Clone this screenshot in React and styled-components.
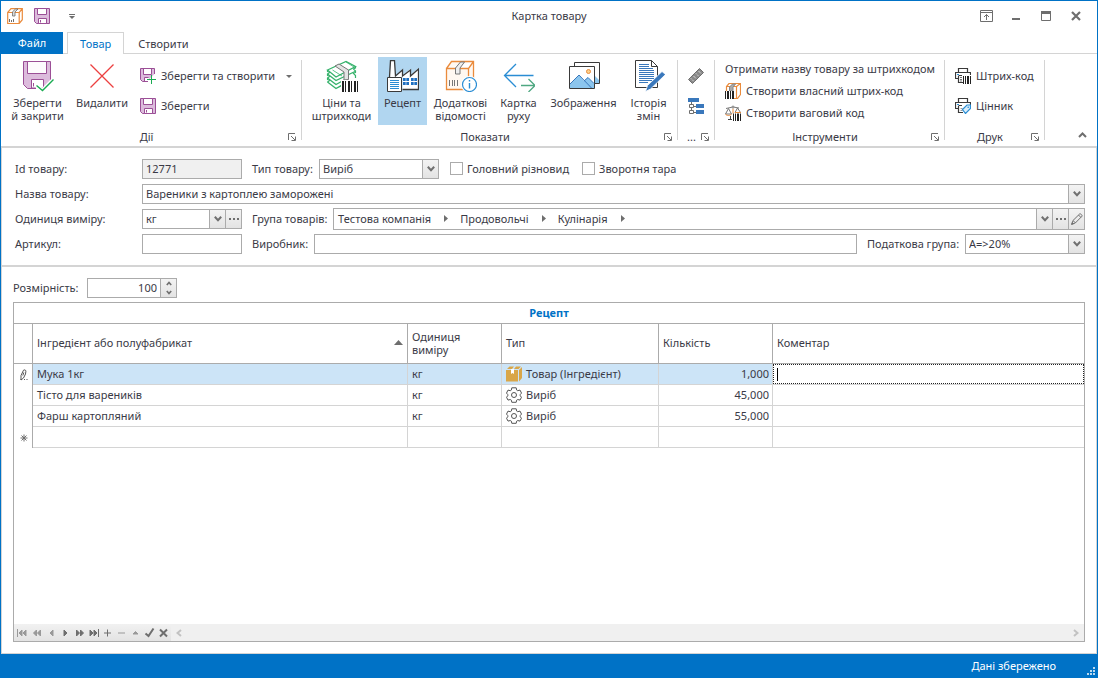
import React from "react";
import styled, { createGlobalStyle, css } from "styled-components";

const c = {
  blue: "#0072c6",
  text: "#3a3a46",
  line: "#d4d4d4",
  edge: "#ababab",
  gray: "#6e6e6e",
  purple: "#9b4f96",
  lilac: "#dcbbdc",
  orange: "#ea8b3c",
  green: "#1aab52",
  steel: "#3a78bc",
  sky: "#2a8dd4",
  dark: "#3a3a3a",
};

const Global = createGlobalStyle`
  *, *::before, *::after { box-sizing: border-box; }
  body { margin: 0; background: #fff; }
  body, button, input, select {
    font-family: "Noto Sans", "Open Sans", sans-serif;
    font-size: 11px;
    line-height: 13px;
    color: ${c.text};
  }
  button { border: 0; padding: 0; background: none; cursor: pointer; }
  svg { display: block; flex: none; }
`;

/* ---------- icons ---------- */

const Svg = ({ w = 16, h = w, children, ...rest }) => (
  <svg width={w} height={h} viewBox={`0 0 ${w} ${h}`} fill="none" aria-hidden="true" {...rest}>
    {children}
  </svg>
);

const SaveIcon = () => (
  <Svg>
    <path d="M.5.5h15v15h-13l-2-2z" fill={c.lilac} stroke={c.purple} />
    <path d="M3.5.5h9v6h-9zM4.5 10.5h8v5h-8z" fill="#fff" stroke={c.purple} />
    <path d="M6.500 12v2.500" stroke={c.purple} />
  </Svg>
);

const SaveNewIcon = () => (
  <Svg>
    <path d="M14.5 6V.5H.5v11l2 2H7" fill={c.lilac} />
    <path d="M4 1h7v5H4zM5 10h4v3H5z" fill="#fff" />
    <path d="M14.5 6V.5H.5v11l2 2H8M3.5.5v6h8v-6M4.5 13V9.500h4" stroke={c.purple} />
    <path d="M11.500 7v9M7 11.500h9" stroke={c.green} />
  </Svg>
);

const SaveCloseIcon = () => (
  <Svg w={32}>
    <path d="M1.500 1.500h27v27h-23l-4-4z" fill={c.lilac} stroke={c.purple} />
    <path d="M5.500 1.500h19v12h-19z" fill="#fdfbfd" stroke={c.purple} />
    <path d="M9.500 28v-8.500h12V28z" fill="#fff" stroke={c.purple} />
    <path d="M11.500 23v3.500" stroke={c.purple} />
    <path d="M14 24.500l6.500 6L32 18.500V32H14z" fill="#fff" />
    <path d="M14.500 25.500l6 5L31.500 19.500" stroke="#fff" strokeWidth="4" />
    <path d="M14.500 25.500l6 5L31.500 19.500" stroke={c.green} strokeWidth="1.400" />
  </Svg>
);

const DeleteIcon = () => (
  <Svg w={32}>
    <path d="M4.500 4.500l23 23M27.500 4.500l-23 23" stroke="#ec4040" strokeWidth="1.300" />
  </Svg>
);

const BoxIcon = () => (
  <Svg>
    <path d="M.7 4.500h11.500v11H.7zM.7 4.500L4 .7h11.300v11l-3.100 3.800V4.500l3.100-3.800" fill="#fff" stroke={c.orange} strokeWidth="1.200" />
    <path d="M5.500 8V3.800L8.500 1H11L8 4v4z" fill="#ddd" stroke={c.gray} strokeWidth=".8" />
    <path d="M2.500 11v3M4.500 12v2M6.500 11v3" stroke={c.gray} />
  </Svg>
);

const Bars = ({ x, y, h, n = 5, fill = "#222" }) => (
  <g fill={fill}>
    {Array.from({ length: n }, (_, i) => (
      <rect key={i} x={x + i * 3} y={y} width={i % 2 ? 1 : 2} height={h} />
    ))}
  </g>
);

const PricesIcon = () => (
  <Svg w={32}>
    <path d="M1.500 22L10 28.500 16 25M1.500 18L10 24.500 20 19M1.500 14L10 20.500 29 11.500M10 28.500l6-3" stroke="#35b26b" strokeWidth="1.300" />
    <path d="M1.500 10L20 1.500l9.500 5L10 17z" fill="#fff" stroke="#35b26b" strokeWidth="1.300" />
    <path d="M29.500 6.500v1.500l-2 1 2 2v1.500l-2 1 2 2v2.500" stroke="#35b26b" strokeWidth="1.200" />
    <path d="M1.500 10v1.500l2 1-2 1.500v1.500l2 1-2 1.500v1.500l2 1-2 1.500" stroke="#35b26b" strokeWidth="1.200" />
    <path d="M6.500 10L16 16M12 7.500L20 12M20 2l8 5" stroke="#35b26b" strokeWidth=".8" />
    <path d="M9 6l4-2 9.500 6v9.500L18 20v-8z" fill="#e4e4e4" stroke="#777" />
    <path d="M15 20h17v12H15z" fill="#fff" />
    <Bars x={16} y={21} h={11} n={6} />
  </Svg>
);

const RecipeIcon = () => (
  <Svg w={32}>
    <path d="M2.500 19L3.500.5h4l1 16L15.500 9v6.500L23.500 9v6.500L31.500 8v21.500h-16V17H2.500z" fill="#fff" />
    <path d="M2.500 17L3.500.7h4l1 15.300L15.500 10v6L23.500 10v6L31.500 9v20.500h-16" stroke={c.dark} strokeWidth="1.300" />
    <path d="M.5 17.500h14v14H.5z" fill="#fff" stroke={c.dark} />
    <path d="M3 20.500h9M3 22.500h9M3 24.500h9M3 26.500h9M3 28.500h9" stroke={c.sky} />
    <path d="M16 18h6v3h-6zM24 18h6v3h-6zM16 22h6v3h-6zM24 22h6v3h-6z" fill="#1f6fc0" />
    <path d="M19 18v7M27 18v7" stroke="#fff" strokeWidth=".6" />
  </Svg>
);

const InfoIcon = () => (
  <Svg w={32}>
    <path d="M1.500 8.500h22v21h-22zM1.500 8.500l5-7h22v21l-5 7v-21l5-7" fill="#fff8f1" stroke={c.orange} strokeWidth="1.300" />
    <path d="M10.500 14V8l5-6h4l-4.500 6v6z" fill="#eee" stroke="#777" />
    <path d="M4.500 20v6M7.500 20v6M9.500 20v6M12.500 20v6" stroke="#777" />
    <circle cx="24.500" cy="24.500" r="8.500" fill="#fff" />
    <circle cx="24.500" cy="24.500" r="7" fill="#fff" stroke={c.sky} strokeWidth="1.200" />
    <path d="M24.500 23v5.500M24.500 20v1.500" stroke={c.sky} strokeWidth="1.400" />
  </Svg>
);

const MoveIcon = () => (
  <Svg w={32}>
    <path d="M30.500 15.500H1.500M13 4L1.500 15.500 13 27" stroke={c.sky} strokeWidth="1.300" />
    <path d="M18 25.500h14M25.500 19l6.500 6.500-6.500 6.500" stroke="#4fa882" strokeWidth="1.300" />
  </Svg>
);

const PictureIcon = () => (
  <Svg w={32}>
    <path d="M6.500 2.500h25v21h-25z" fill="#fff" stroke={c.dark} />
    <path d="M27 16l4 4v3h-4z" fill="#8cc6ee" />
    <path d="M1.500 6.500h25v22h-25z" fill="#fff" stroke={c.dark} />
    <path d="M2 24l9-9 5 6 4-3.500 6 6V28H2z" fill="#8cc6ee" />
    <path d="M2 24l9-9 12.500 13M16 21l4-3.500 6 6" stroke={c.steel} />
    <circle cx="20.500" cy="11.500" r="2" fill="#fbd08a" stroke={c.orange} />
  </Svg>
);

const HistoryIcon = () => (
  <Svg w={32}>
    <path d="M2.500.5h16l6 6v21h-22z" fill="#fff" stroke={c.dark} />
    <path d="M18.500.5v6h6" stroke={c.dark} />
    <path
      d="M6 4.500h10M6 6.500h10M6 8.500h14M6 10.500h15M6 12.500h15M6 14.500h15M6 16.500h15M6 18.500h15M6 20.500h13M6 22.500h9"
      stroke={c.steel}
    />
    <path d="M12.500 31.500l2-6L29 11.500l3.500 3L17.500 29z" fill={c.steel} stroke="#fff" strokeWidth=".8" />
  </Svg>
);

const RulerIcon = () => (
  <Svg>
    <path d="M.5 11.500l11-11 4 4-11 11z" fill="#8a8a8a" stroke={c.gray} />
    <path d="M3 10.500l3 3M5.500 8l3 3M8 5.500l3 3M10.500 3l3 3" stroke="#fff" strokeDasharray="1 1" />
  </Svg>
);

const TreeIcon = () => (
  <Svg>
    <path d="M0 0h11v4H0zM8 6h8v4H8zM8 12h8v4H8z" fill={c.steel} />
    <path d="M3.500 4v10M5 8.500h3M5 14.500h3" stroke={c.gray} />
    <path d="M1.500 6.500h4v3h-4zM1.500 12.500h4v3h-4z" fill="#fff" stroke={c.gray} />
  </Svg>
);

const OwnCodeIcon = () => (
  <Svg>
    <path d="M1.500 8V3.500L4 .5h11.500v11l-3 4H9M11.500 15V3.500L15 .7M1.500 3.500h10" stroke={c.orange} strokeWidth="1.200" />
    <path d="M4.500 8V4L7.500 1h3L8 4v4z" fill="#aaa" stroke="#888" />
    <path d="M0 8h9v8H0z" fill="#222" />
    <path d="M1.500 8v8M4.500 8v8M6.500 8v8" stroke="#fff" />
  </Svg>
);

const WeightIcon = () => (
  <Svg>
    <path d="M1 3.500L8 2l6 1M3.500 3.500l-3 5.500h6zM12.500 3l-2.500 4.500h5.500z" stroke="#777" />
    <path d="M8 3.500v5M.5 9c1 2 5 2 6 0M10 7.500h6" stroke={c.orange} />
    <circle cx="8" cy="2" r="1.500" fill="#999" />
    <path d="M3 14.500h4M5.500 11v3" stroke="#444" />
    <path d="M8 8.500h8V16H8z" fill="#222" />
    <path d="M9.500 8v8M11.500 8v8M14.500 8v8" stroke="#fff" />
  </Svg>
);

const PrintBase = () => (
  <path d="M3.500 4V.5h9V4M3 10.500H.5v-6h15V7M3 4.500h10M3.500 8v6.500H8M3.500 7.500H7" stroke={c.dark} strokeWidth="1.200" />
);

const PrintCodeIcon = () => (
  <Svg>
    <PrintBase />
    <path d="M2 6.500h2" stroke={c.sky} />
    <path d="M5 9.500h2M5 11.500h2M5 13h2" stroke="#777" />
    <path d="M8 8h8v8H8z" fill="#222" />
    <path d="M9.500 8v8M11.500 8v8M14.500 8v8" stroke="#fff" />
  </Svg>
);

const PrintTagIcon = () => (
  <Svg>
    <PrintBase />
    <path d="M2 6.500h2" stroke={c.sky} />
    <path d="M5.500 10.500h2M5.500 12.500h2" stroke="#999" />
    <path d="M7.500 11.500L12 7h3.500v3.500l-5 5z" fill="#d9edfa" stroke={c.sky} strokeWidth="1.200" />
    <circle cx="13.200" cy="9.200" r=".8" fill={c.sky} />
  </Svg>
);

const ProductIcon = () => (
  <Svg>
    <path d="M0 4h12v11.500H0zM1 3l2.500-2.500H8L6 3zM8 3l2-2.500h5L12.500 3zM13 4l3-3v11l-3 3.500z" fill="#d9a648" />
    <path d="M5 3h3v5l-1.500-1L5 8z" fill="#fff" />
  </Svg>
);

const GearIcon = () => (
  <Svg>
    <path
      d="M5.800.8h4.400l.5 2.300 1 .6 2.300-.6 1.500 3-1.300 1.500v1.200l1.300 1.400-1.500 2.900-2.300-.6-1 .6-.5 2.200H5.800l-.5-2.200-1-.6-2.300.6L.5 10.200l1.300-1.400V7.600L.5 6.100l1.500-3 2.300.6 1-.6z"
      stroke="#555"
    />
    <circle cx="8" cy="8" r="2.500" stroke="#555" />
  </Svg>
);

const PencilIcon = () => (
  <Svg w={12}>
    <path d="M.8 11.200L2 7.500 8.700.9c.7-.6 3 1.500 2.300 2.300L4.300 10zM2.300 7.800l2 2M7.500 2l2.300 2.300" stroke={c.gray} />
    <path d="M0 12l1-3 2 2z" fill={c.gray} />
  </Svg>
);

const EditMark = () => (
  <Svg w={8} h={12}>
    <path d="M1 11V6.500L3.500 1.200c.5-.8 2.700 0 2.400 1L5.500 5 3.500 9zM3.800 3.500L2.800 6.500" stroke="#555" />
    <path d="M.5 10.500h1M4 10.500h1M6.500 10.500h1" stroke="#555" />
  </Svg>
);

const NewMark = () => (
  <Svg w={8}>
    <path d="M4 .5v7M.5 4h7M1.500 1.500l5 5M6.500 1.500l-5 5" stroke={c.gray} />
  </Svg>
);

const ChevronIcon = () => (
  <Svg w={8} h={6}>
    <path d="M.8.8L4 4.200 7.200.8" stroke="#707070" strokeWidth="2" />
  </Svg>
);

const SpinArrow = ({ up }) => (
  <Svg w={6} h={5}>
    <path d={up ? "M.8 4L3 1.500 5.200 4" : "M.8 1L3 3.500 5.200 1"} stroke="#707070" strokeWidth="1.700" />
  </Svg>
);

const DotsIcon = () => (
  <Svg w={10} h={2}>
    <path d="M0 0h2v2H0zM4 0h2v2H4zM8 0h2v2H8z" fill={c.gray} />
  </Svg>
);

const LauncherIcon = () => (
  <Svg w={8}>
    <path d="M.5 7V.5H7M3 3l4 4M7.500 3.500v4h-4" stroke={c.gray} />
  </Svg>
);

const DownTriangle = () => (
  <Svg w={6} h={3}>
    <path d="M0 0h6L3 3z" fill={c.gray} />
  </Svg>
);

const CrumbArrow = () => (
  <Svg w={4} h={7}>
    <path d="M0 0l4 3.500L0 7z" fill={c.gray} />
  </Svg>
);

/* ---------- window frame ---------- */

const Text = styled.span`
  padding-bottom: 2px;
`;

const Window = styled.div`
  display: flex;
  flex-direction: column;
  min-height: 100vh;
  border: 1px solid ${c.blue};
  border-bottom: 0;
`;

const TitleBar = styled.header`
  display: grid;
  grid-template-columns: 1fr auto 1fr;
  align-items: center;
  height: 31px;
  padding: 0 6px 1px;
`;

const QuickAccess = styled.div`
  display: flex;
  align-items: center;
  gap: 11px;
`;

const QuickMenu = styled.button`
  display: flex;
  flex-direction: column;
  gap: 1px;
  margin-left: 8px;
  &::before { content: ""; height: 1px; background: ${c.gray}; }
`;

const WindowTitle = styled.h1`
  margin: 0;
  padding-bottom: 1px;
  font-size: 11px;
  font-weight: 400;
`;

const WindowControls = styled.div`
  display: flex;
  justify-content: flex-end;
`;

const WindowButton = styled.button`
  display: grid;
  place-items: center;
  width: 30px;
  height: 24px;
`;

const TabBar = styled.nav`
  display: flex;
  height: 22px;
  border-bottom: 1px solid ${c.line};
`;

const FileTab = styled.button`
  width: 62px;
  height: 22px;
  padding-bottom: 2px;
  background: ${c.blue};
  color: #fff;
`;

const Tab = styled.button`
  height: 22px;
  padding: 0 14px;
  ${(p) =>
    p.$active &&
    css`
      margin-left: 4px;
      padding: 0 12px;
      background: #fff;
      border: 1px solid ${c.line};
      border-bottom: 0;
      color: ${c.blue};
    `}
`;

/* ---------- ribbon ---------- */

const RibbonBar = styled.div`
  display: flex;
  height: 94px;
  border-bottom: 2px solid ${c.line};
`;

const GroupBox = styled.section`
  display: flex;
  flex-direction: column;
  width: ${(p) => p.$width}px;
  padding-top: 3px;
`;

const GroupBody = styled.div`
  display: flex;
  align-items: center;
  height: 68px;
  padding-left: ${(p) => p.$inset}px;
`;

const GroupFooter = styled.div`
  display: flex;
  align-items: center;
  height: 18px;
  margin-top: 3px;
  padding-right: 5px;
`;

const GroupName = styled.span`
  flex: 1;
  padding: 0 0 2px 4px;
  text-align: center;
`;

const Divider = styled.div`
  width: 1px;
  margin: 6px 0;
  background: ${c.line};
`;

const BigButton = styled.button`
  display: flex;
  flex-direction: column;
  align-items: center;
  gap: 4px;
  width: ${(p) => p.$width}px;
  height: 68px;
  padding-top: 3px;
  white-space: pre-line;
  background: ${(p) => (p.$active ? "#b1d6f0" : "transparent")};
`;

const ButtonColumn = styled.div`
  display: flex;
  flex-direction: column;
  align-items: flex-start;
  padding-left: ${(p) => p.$inset || 0}px;
`;

const SmallButton = styled.button`
  display: flex;
  align-items: center;
  gap: 5px;
  height: ${(p) => (p.$dense ? 22 : 30)}px;
  white-space: nowrap;
`;

const SplitRow = styled.div`
  display: flex;
  align-items: center;
  gap: 11px;
`;

const CollapseButton = styled.button`
  align-self: flex-end;
  margin: 0 10px 8px auto;
`;

function Group({ name, width, inset, children }) {
  return (
    <>
      <GroupBox $width={width} aria-label={name}>
        <GroupBody $inset={inset}>{children}</GroupBody>
        <GroupFooter>
          <GroupName>{name}</GroupName>
          <button aria-label="Параметри групи"><LauncherIcon /></button>
        </GroupFooter>
      </GroupBox>
      <Divider />
    </>
  );
}

/* ---------- form ---------- */

const Client = styled.main`
  display: flex;
  flex: 1;
  flex-direction: column;
  border: 1px solid ${c.line};
  border-top: 0;
`;

const Form = styled.form`
  display: flex;
  flex-direction: column;
  gap: 4px;
  padding: 10px 11px 11px 13px;
  border-bottom: 2px solid ${c.line};
`;

const FormRow = styled.div`
  display: flex;
  align-items: center;
  height: 21px;
`;

const Label = styled.label`
  flex: none;
  width: ${(p) => p.$width}px;
  white-space: nowrap;
`;

const fieldBox = css`
  height: 20px;
  border: 1px solid ${c.edge};
  background: #fff;
`;

const TextInput = styled.input`
  ${fieldBox}
  flex: ${(p) => (p.$width ? "none" : "1")};
  width: ${(p) => (p.$width ? `${p.$width}px` : "auto")};
  min-width: 0;
  padding: 0 3px;
  outline: 0;
  &:read-only { background: #f0f0f0; }
`;

const Field = styled.div`
  ${fieldBox}
  display: flex;
  flex: ${(p) => (p.$width ? "none" : "1")};
  width: ${(p) => (p.$width ? `${p.$width}px` : "auto")};
  height: ${(p) => (p.$tall ? 22 : 20)}px;
  min-width: 0;
`;

const Inner = styled.input`
  flex: 1;
  min-width: 0;
  padding: 0 3px;
  border: 0;
  outline: 0;
  background: none;
  text-align: ${(p) => p.$align || "left"};
`;

const FieldButton = styled.button`
  display: grid;
  place-items: center;
  width: 16px;
  border-left: 1px solid ${c.edge};
  background: linear-gradient(#f3f3f3, #e3e3e3);
`;

const SelectBox = styled.span`
  position: relative;
  display: flex;
  flex: ${(p) => (p.$width ? "none" : "1")};
  width: ${(p) => (p.$width ? `${p.$width}px` : "auto")};
`;

const NativeSelect = styled.select`
  ${fieldBox}
  flex: 1;
  min-width: 0;
  padding: 0 20px 0 3px;
  appearance: none;
  border-radius: 0;
  outline: 0;
`;

const SelectArrow = styled.span`
  position: absolute;
  top: 1px;
  right: 1px;
  bottom: 1px;
  display: grid;
  place-items: center;
  width: 16px;
  border-left: 1px solid ${c.edge};
  background: linear-gradient(#f3f3f3, #e3e3e3);
  pointer-events: none;
`;

const Gap = styled.span`
  flex: none;
  width: 10px;
`;

const CheckLabel = styled.label`
  display: flex;
  align-items: center;
  gap: 4px;
  margin-left: 11px;
  padding-right: 2px;
`;

const Checkbox = styled.input.attrs({ type: "checkbox" })`
  width: 13px;
  height: 13px;
  margin: 0;
  appearance: none;
  border: 1px solid ${c.edge};
  background: #fff;
  &:checked { background: ${c.blue}; }
`;

const Crumbs = styled.div`
  display: flex;
  flex: 1;
  align-items: center;
  gap: 12px;
  padding-left: 4px;
`;

const Crumb = styled.button`
  display: flex;
  align-items: center;
  gap: 13px;
`;

const Spinner = styled.div`
  display: flex;
  flex-direction: column;
  width: 16px;
  border-left: 1px solid ${c.edge};
  background: linear-gradient(#f3f3f3, #e3e3e3);
`;

const SpinButton = styled.button`
  display: grid;
  flex: 1;
  place-items: center;
`;

function Select({ id, value, width }) {
  return (
    <SelectBox $width={width}>
      <NativeSelect id={id} defaultValue={value}>
        <option>{value}</option>
      </NativeSelect>
      <SelectArrow><ChevronIcon /></SelectArrow>
    </SelectBox>
  );
}

/* ---------- recipe grid ---------- */

const RecipeArea = styled.div`
  display: flex;
  flex: 1;
  flex-direction: column;
  gap: 4px;
  padding: 10px 11px 11px;
`;

const GridPanel = styled.div`
  display: flex;
  flex: 1;
  flex-direction: column;
  border: 1px solid ${c.edge};
`;

const Table = styled.table`
  width: 100%;
  table-layout: fixed;
  border-spacing: 0;
`;

const Caption = styled.caption`
  height: 21px;
  padding-top: 3px;
  border-bottom: 1px solid ${c.edge};
  color: ${c.blue};
  font-weight: 700;
`;

const Col = styled.col`
  width: ${(p) => (p.$width ? `${p.$width}px` : "auto")};
`;

const HeadCell = styled.th`
  height: 40px;
  padding: 0 4px 2px;
  border-right: 1px solid ${c.edge};
  border-bottom: 1px solid ${c.edge};
  font-weight: 400;
  text-align: left;
  &:last-child { border-right: 0; }
`;

const HeadSort = styled.span`
  display: flex;
  align-items: center;
  justify-content: space-between;
`;

const Row = styled.tr`
  background: ${(p) => (p.$selected ? "#cce4f7" : "#fff")};
`;

const MarkCell = styled.td`
  height: 21px;
  padding: 0 0 0 6px;
  border-right: 1px solid ${c.edge};
  background: #fff;
`;

const Cell = styled.td`
  height: 21px;
  padding: ${(p) => (p.$flush ? "0" : p.$icon ? "0 3px 0 4px" : "0 3px 2px 4px")};
  border-right: 1px solid ${c.line};
  border-bottom: 1px solid ${c.line};
  text-align: ${(p) => p.$align || "left"};
  &:last-child { border-right: 0; }
`;

const TypeValue = styled.span`
  display: flex;
  align-items: center;
  gap: 4px;
`;

const CellEditor = styled.div`
  display: flex;
  align-items: center;
  height: 20px;
  padding-left: 3px;
  border: 1px dotted #222;
  background: #fff;
`;

const Caret = styled.span`
  width: 1px;
  height: 13px;
  background: #000;
`;

const Navigator = styled.div`
  display: flex;
  height: 17px;
  margin-top: auto;
  background: #f0f0f0;
`;

const NavButtons = styled.div`
  display: flex;
  background: linear-gradient(#f1f1f1, #e3e3e3);
`;

const NavButton = styled.button`
  display: grid;
  place-items: center;
  width: ${(p) => (p.$wide ? 15 : 14)}px;
`;

const ScrollTrack = styled.div`
  display: flex;
  flex: 1;
  align-items: center;
  justify-content: space-between;
  padding: 0 5px;
`;

const StatusBar = styled.footer`
  display: flex;
  align-items: center;
  justify-content: flex-end;
  gap: 31px;
  height: 24px;
  background: ${c.blue};
  color: #fff;
`;

const Grip = styled.span`
  align-self: flex-end;
  padding: 0 2px 3px 0;
`;

const rows = [
  { name: "Мука 1кг", unit: "кг", type: "Товар (Інгредієнт)", qty: "1,000", product: true },
  { name: "Тісто для вареників", unit: "кг", type: "Виріб", qty: "45,000" },
  { name: "Фарш картопляний", unit: "кг", type: "Виріб", qty: "55,000" },
];

const navItems = [
  { label: "Перший", d: "M1.500 2v8M6 3v6L3 6zM10 3v6L7 6z", dim: true, wide: true },
  { label: "Назад на сторінку", d: "M5.500 3v6l-3-3zM9.500 3v6l-3-3z", dim: true, wide: true },
  { label: "Попередній", d: "M7 3v6L4 6z", dim: true, wide: true },
  { label: "Наступний", d: "M4 3v6l3-3z" },
  { label: "Вперед на сторінку", d: "M2.500 3v6l3-3zM6.500 3v6l3-3z" },
  { label: "Останній", d: "M2 3v6l3-3zM6 3v6l3-3zM10.500 2v8" },
  { label: "Додати", d: "M5.500 2.500v7M2 6h7" },
  { label: "Вилучити", d: "M2 6h7", dim: true },
  { label: "Редагувати", d: "M3 7h5L5.500 4.500z", dim: true },
  { label: "Застосувати", d: "M1.500 6.500L4.500 9 9.500 1.500", bold: true },
  { label: "Скасувати", d: "M2 2.500l7 7M9 2.500l-7 7", bold: true },
];

const ScrollArrow = ({ right }) => (
  <Svg w={6} h={8}>
    <path d={right ? "M1 1l3.500 3L1 7" : "M5 1L1.500 4 5 7"} stroke="#c2c2c2" strokeWidth="2" />
  </Svg>
);

export default function App() {
  return (
    <>
      <Global />
      <Window>
        <TitleBar>
          <QuickAccess>
            <BoxIcon />
            <button aria-label="Зберегти"><SaveIcon /></button>
            <QuickMenu aria-label="Налаштувати панель"><DownTriangle /></QuickMenu>
          </QuickAccess>
          <WindowTitle>Картка товару</WindowTitle>
          <WindowControls>
            <WindowButton aria-label="Сховати стрічку">
              <Svg w={13} h={12}>
                <path d="M.5.5h12v11H.5zM.5 2.500h12M6.500 10V4.500M4 7l2.500-2.500L9 7" stroke={c.gray} />
              </Svg>
            </WindowButton>
            <WindowButton aria-label="Згорнути">
              <Svg w={8} h={12}><path d="M0 9h8" stroke={c.gray} strokeWidth="2" /></Svg>
            </WindowButton>
            <WindowButton aria-label="Розгорнути">
              <Svg w={10}><path d="M.5 2v7.500h9V2" stroke={c.gray} /><path d="M0 0h10v3H0z" fill={c.gray} /></Svg>
            </WindowButton>
            <WindowButton aria-label="Закрити">
              <Svg w={10}><path d="M1 1l8 8M9 1L1 9" stroke={c.gray} strokeWidth="2.200" /></Svg>
            </WindowButton>
          </WindowControls>
        </TitleBar>

        <TabBar>
          <FileTab>Файл</FileTab>
          <Tab $active>Товар</Tab>
          <Tab>Створити</Tab>
        </TabBar>

        <RibbonBar>
          <Group name="Дії" width={300} inset={4}>
            <BigButton $width={65}><SaveCloseIcon />{"Зберегти\nй закрити"}</BigButton>
            <BigButton $width={64}><DeleteIcon />Видалити</BigButton>
            <ButtonColumn $inset={6}>
              <SplitRow>
                <SmallButton><SaveNewIcon /><Text>Зберегти та створити</Text></SmallButton>
                <button aria-label="Інші варіанти"><DownTriangle /></button>
              </SplitRow>
              <SmallButton><SaveIcon /><Text>Зберегти</Text></SmallButton>
            </ButtonColumn>
          </Group>
          <Group name="Показати" width={375} inset={3}>
            <BigButton $width={73}><PricesIcon />{"Ціни та\nштрихкоди"}</BigButton>
            <BigButton $width={49} $active><RecipeIcon />Рецепт</BigButton>
            <BigButton $width={67}><InfoIcon />{"Додаткові\nвідомості"}</BigButton>
            <BigButton $width={49}><MoveIcon />{"Картка\nруху"}</BigButton>
            <BigButton $width={81}><PictureIcon />Зображення</BigButton>
            <BigButton $width={49}><HistoryIcon />{"Історія\nзмін"}</BigButton>
          </Group>
          <Group name="..." width={36} inset={10}>
            <ButtonColumn>
              <SmallButton aria-label="Розміри"><RulerIcon /></SmallButton>
              <SmallButton aria-label="Структура"><TreeIcon /></SmallButton>
            </ButtonColumn>
          </Group>
          <Group name="Інструменти" width={229} inset={10}>
            <ButtonColumn>
              <SmallButton $dense><Text>Отримати назву товару за штрихкодом</Text></SmallButton>
              <SmallButton $dense><OwnCodeIcon /><Text>Створити власний штрих-код</Text></SmallButton>
              <SmallButton $dense><WeightIcon /><Text>Створити ваговий код</Text></SmallButton>
            </ButtonColumn>
          </Group>
          <Group name="Друк" width={99} inset={10}>
            <ButtonColumn>
              <SmallButton><PrintCodeIcon /><Text>Штрих-код</Text></SmallButton>
              <SmallButton><PrintTagIcon /><Text>Цінник</Text></SmallButton>
            </ButtonColumn>
          </Group>
          <CollapseButton aria-label="Згорнути стрічку">
            <Svg w={9} h={6}><path d="M1 5l3.500-3.500L8 5" stroke={c.gray} strokeWidth="2" /></Svg>
          </CollapseButton>
        </RibbonBar>

        <Client>
          <Form onSubmit={(e) => e.preventDefault()}>
            <FormRow>
              <Label htmlFor="pid" $width={127}>Id товару:</Label>
              <TextInput id="pid" $width={100} readOnly value="12771" />
              <Gap />
              <Label htmlFor="ptype" $width={67}>Тип товару:</Label>
              <Select id="ptype" width={120} value="Виріб" />
              <CheckLabel><Checkbox />Головний різновид</CheckLabel>
              <CheckLabel><Checkbox />Зворотня тара</CheckLabel>
            </FormRow>
            <FormRow>
              <Label htmlFor="pname" $width={127}>Назва товару:</Label>
              <Select id="pname" value="Вареники з картоплею заморожені" />
            </FormRow>
            <FormRow>
              <Label htmlFor="punit" $width={127}>Одиниця виміру:</Label>
              <Field $width={100}>
                <Inner id="punit" defaultValue="кг" />
                <FieldButton type="button" aria-label="Список"><ChevronIcon /></FieldButton>
                <FieldButton type="button" aria-label="Вибрати"><DotsIcon /></FieldButton>
              </Field>
              <Gap />
              <Label as="span" $width={81}>Група товарів:</Label>
              <Field $tall>
                <Crumbs>
                  {["Тестова компанія", "Продовольчі", "Кулінарія"].map((t) => (
                    <Crumb type="button" key={t}>{t}<CrumbArrow /></Crumb>
                  ))}
                </Crumbs>
                <FieldButton type="button" aria-label="Список"><ChevronIcon /></FieldButton>
                <FieldButton type="button" aria-label="Вибрати"><DotsIcon /></FieldButton>
                <FieldButton type="button" aria-label="Змінити"><PencilIcon /></FieldButton>
              </Field>
            </FormRow>
            <FormRow>
              <Label htmlFor="psku" $width={127}>Артикул:</Label>
              <TextInput id="psku" $width={100} />
              <Gap />
              <Label htmlFor="pmaker" $width={62}>Виробник:</Label>
              <TextInput id="pmaker" />
              <Gap />
              <Label htmlFor="ptax" $width={98}>Податкова група:</Label>
              <Select id="ptax" width={120} value="А=>20%" />
            </FormRow>
          </Form>

          <RecipeArea>
            <FormRow>
              <Label htmlFor="psize" $width={74}>Розмірність:</Label>
              <Field $width={90}>
                <Inner id="psize" defaultValue="100" $align="right" />
                <Spinner>
                  <SpinButton aria-label="Більше"><SpinArrow up /></SpinButton>
                  <SpinButton aria-label="Менше"><SpinArrow /></SpinButton>
                </Spinner>
              </Field>
            </FormRow>

            <GridPanel>
              <Table>
                <Caption>Рецепт</Caption>
                <colgroup>
                  <Col $width={19} />
                  <Col $width={375} />
                  <Col $width={94} />
                  <Col $width={157} />
                  <Col $width={114} />
                  <Col />
                </colgroup>
                <thead>
                  <tr>
                    <HeadCell />
                    <HeadCell>
                      <HeadSort>
                        Інгредієнт або полуфабрикат
                        <Svg w={9} h={5}><path d="M0 5h9L4.500 0z" fill={c.gray} /></Svg>
                      </HeadSort>
                    </HeadCell>
                    <HeadCell>Одиниця виміру</HeadCell>
                    <HeadCell>Тип</HeadCell>
                    <HeadCell>Кількість</HeadCell>
                    <HeadCell>Коментар</HeadCell>
                  </tr>
                </thead>
                <tbody>
                  {rows.map((r, i) => (
                    <Row key={r.name} $selected={i === 0}>
                      <MarkCell>{i === 0 && <EditMark />}</MarkCell>
                      <Cell>{r.name}</Cell>
                      <Cell>{r.unit}</Cell>
                      <Cell $icon>
                        <TypeValue>
                          {r.product ? <ProductIcon /> : <GearIcon />}
                          <Text>{r.type}</Text>
                        </TypeValue>
                      </Cell>
                      <Cell $align="right">{r.qty}</Cell>
                      <Cell $flush>
                        {i === 0 && (
                          <CellEditor>
                            <Caret />
                            <Inner aria-label="Коментар" />
                          </CellEditor>
                        )}
                      </Cell>
                    </Row>
                  ))}
                  <Row>
                    <MarkCell><NewMark /></MarkCell>
                    <Cell /><Cell /><Cell /><Cell /><Cell />
                  </Row>
                </tbody>
              </Table>
              <Navigator>
                <NavButtons>
                  {navItems.map((n) => (
                    <NavButton key={n.label} aria-label={n.label} $wide={n.wide}>
                      <Svg w={12}>
                        <path
                          d={n.d}
                          fill={n.d.includes("z") ? (n.dim ? "#999" : c.gray) : "none"}
                          stroke={n.dim ? "#999" : c.gray}
                          strokeWidth={n.bold ? 2 : 1}
                        />
                      </Svg>
                    </NavButton>
                  ))}
                </NavButtons>
                <ScrollTrack>
                  <ScrollArrow />
                  <ScrollArrow right />
                </ScrollTrack>
              </Navigator>
            </GridPanel>
          </RecipeArea>
        </Client>

        <StatusBar>
          <Text>Дані збережено</Text>
          <Grip>
            <Svg w={8}>
              <path d="M6 0h2v2H6zM3 3h2v2H3zM6 3h2v2H6zM0 6h2v2H0zM3 6h2v2H3zM6 6h2v2H6z" fill="#bcd9ee" />
            </Svg>
          </Grip>
        </StatusBar>
      </Window>
    </>
  );
}
